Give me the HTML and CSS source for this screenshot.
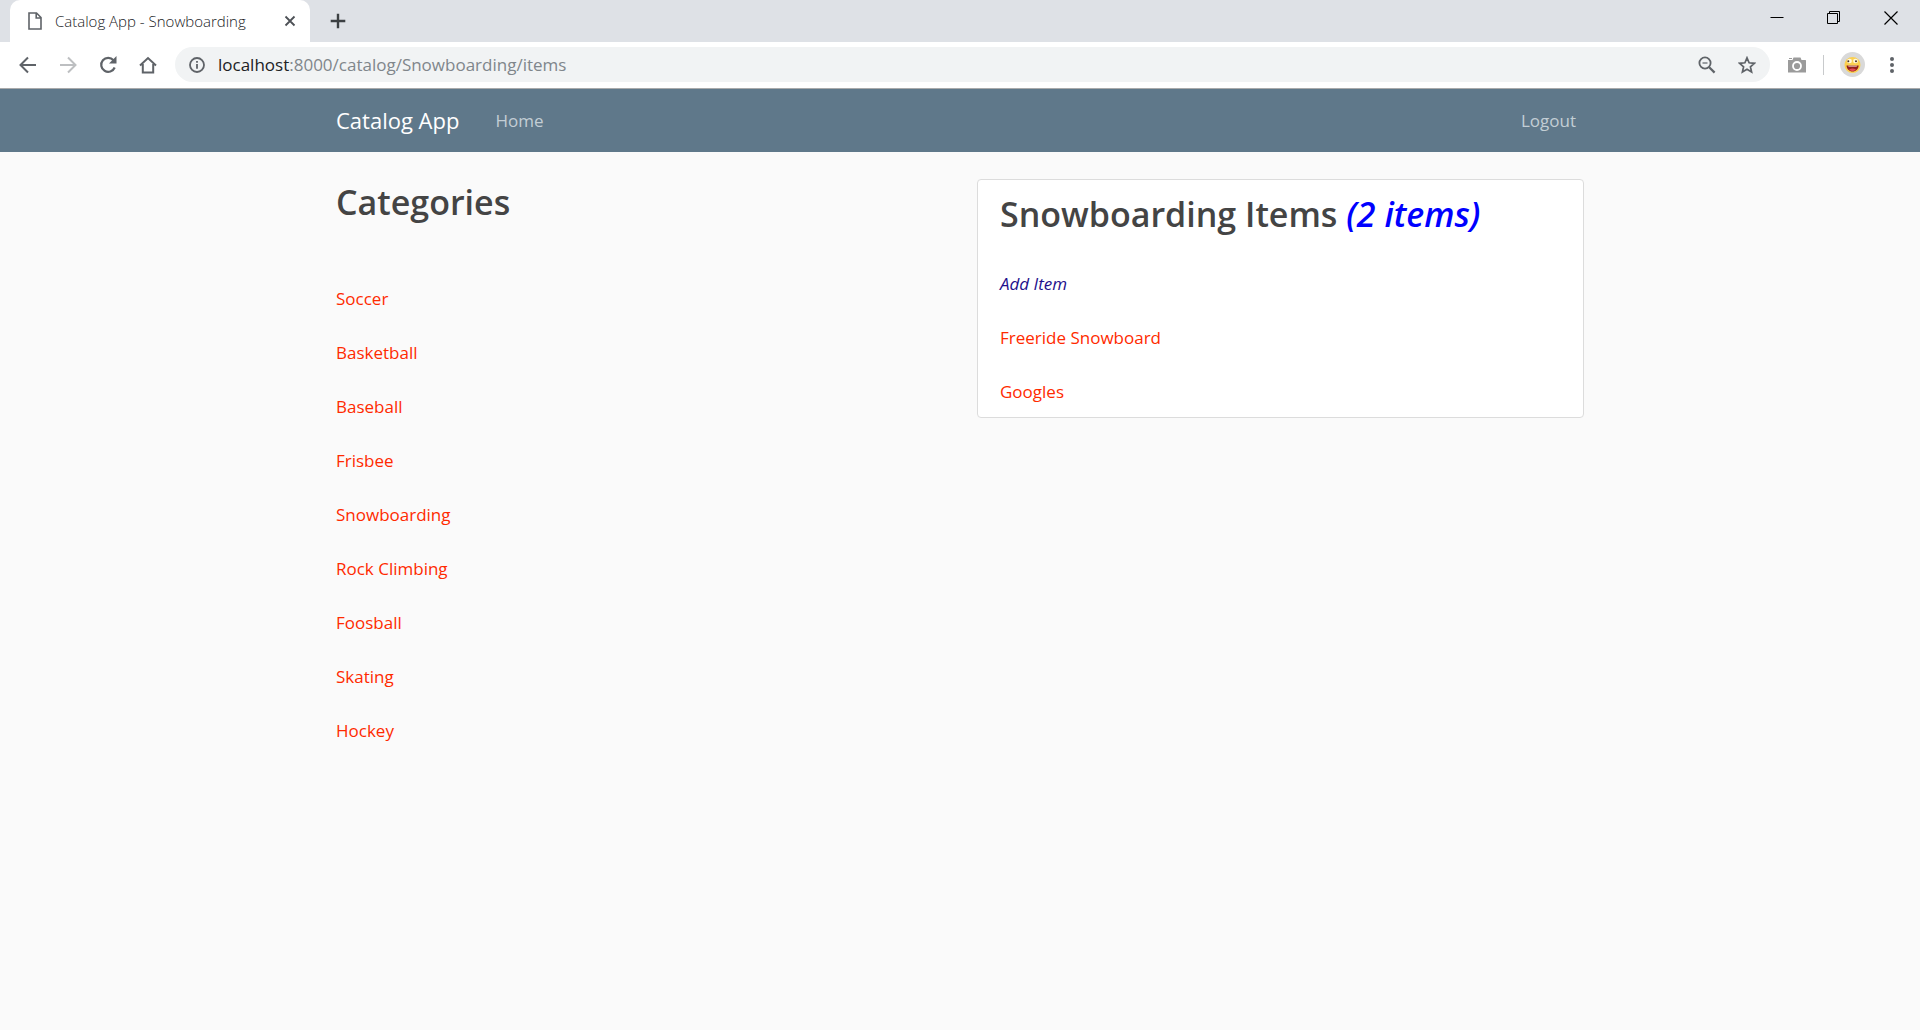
FILE: index.html
```html
<!DOCTYPE html>
<html lang="en">
<head>
<meta charset="utf-8">
<title>Catalog App - Snowboarding</title>
<link rel="stylesheet" href="styles.css">
</head>
<body>
<header class="browser">
  <div class="tab-strip">
    <div class="tab">
      <svg class="tab-icon" width="14" height="18" viewBox="0 0 14 18" fill="none" stroke="#5f6368" stroke-width="1.6"><path d="M1 1h7.500l4.500 4.500V17H1zM8.200 1v5H13"/></svg>
      <span class="tab-title">Catalog App - Snowboarding</span>
      <button class="icon-button" aria-label="Close tab"><svg width="12" height="12" viewBox="0 0 12 12" stroke="#4d5156" stroke-width="1.800"><path d="M1.500 1.500l9 9M10.500 1.500l-9 9"/></svg></button>
    </div>
    <button class="icon-button new-tab" aria-label="New tab"><svg width="16" height="16" viewBox="0 0 16 16" stroke="#3c4043" stroke-width="2.400"><path d="M8 .7v14.600M.7 8h14.600"/></svg></button>
    <div class="window-controls">
      <button class="icon-button" aria-label="Minimize"><svg width="14" height="14" viewBox="0 0 14 14" stroke="#000"><path d="M.5 6.500h13"/></svg></button>
      <button class="icon-button" aria-label="Restore"><svg width="14" height="14" viewBox="0 0 14 14" fill="none" stroke="#000"><path d="M.5 2.500h10v10H.5zM2.500 2.500v-2h10v10h-2"/></svg></button>
      <button class="icon-button" aria-label="Close"><svg width="14" height="14" viewBox="0 0 14 14" stroke="#000" stroke-width="1.200"><path d="M.5.5l13 13M13.500.5l-13 13"/></svg></button>
    </div>
  </div>
  <div class="toolbar">
    <div class="nav-buttons">
      <button class="icon-button" aria-label="Back"><svg width="18" height="18" viewBox="0 0 18 18" fill="none" stroke="#5f6368" stroke-width="2"><path d="M17 9H2M9 1.500L1.500 9 9 16.500"/></svg></button>
      <button class="icon-button" aria-label="Forward"><svg width="18" height="18" viewBox="0 0 18 18" fill="none" stroke="#bdbfc1" stroke-width="2"><path d="M1 9h15M9 1.500L16.500 9 9 16.500"/></svg></button>
      <button class="icon-button" aria-label="Reload"><svg width="18" height="18" viewBox="0 0 18 18" fill="none" stroke="#5f6368" stroke-width="2.200"><path d="M14.500 4.200A7 7 0 1 0 15.700 11.500"/><path d="M17.500 0v7.500H10z" fill="#5f6368" stroke="none"/></svg></button>
      <button class="icon-button" aria-label="Home"><svg width="18" height="18" viewBox="0 0 18 18" fill="none" stroke="#5f6368" stroke-width="2"><path d="M1 9.500L9 2l8 7.500M3.800 8v8.500h10.400V8"/></svg></button>
    </div>
    <div class="address-bar">
      <svg width="16" height="16" viewBox="0 0 16 16" fill="none" stroke="#5f6368" stroke-width="1.800"><circle cx="8" cy="8" r="7"/><path d="M8 7v4.800M8 4v1.800"/></svg>
      <span class="url"><span class="url-host">localhost</span>:8000/catalog/Snowboarding/items</span>
      <button class="icon-button" aria-label="Zoom out"><svg width="18" height="18" viewBox="0 0 18 18" fill="none" stroke="#5f6368" stroke-width="1.800"><circle cx="7" cy="7" r="5.600"/><path d="M11.200 11.200l5.400 5.400" stroke-width="2.200"/><path d="M4.500 7h5" stroke-width="1.200"/></svg></button>
      <button class="icon-button" aria-label="Bookmark"><svg width="18" height="18" viewBox="0 0 18 18" fill="none" stroke="#5f6368" stroke-width="1.700"><path d="M9 1.800l2.100 5 5.300.5-4 3.500 1.200 5.300L9 13.300l-4.600 2.800 1.200-5.300-4-3.500 5.300-.5z"/></svg></button>
    </div>
    <div class="extensions">
      <button class="icon-button" aria-label="Screenshot"><svg width="20" height="18" viewBox="0 0 20 18"><path d="M1 4h4.500l1-2.500h7l1 2.500H18.500l.5.500v12H1z" fill="#9b9b9b"/><path d="M2 2.500h3" stroke="#9b9b9b"/><circle cx="10" cy="10" r="4" fill="#9b9b9b" stroke="#fff" stroke-width="1.800"/></svg></button>
      <span class="divider"></span>
      <button class="icon-button" aria-label="Profile"><svg width="25" height="25" viewBox="0 0 25 25"><circle cx="12.500" cy="12.500" r="12.500" fill="#d9d9d9"/><circle cx="12.500" cy="13" r="8" fill="#fbd051"/><ellipse cx="9.500" cy="9" rx="2.400" ry="2.200" fill="#fff8dc"/><ellipse cx="15.500" cy="9" rx="2.400" ry="2.200" fill="#fff8dc"/><circle cx="8.300" cy="9.200" r="1" fill="#4a3425"/><circle cx="16" cy="9.200" r="1" fill="#4a3425"/><path d="M6.500 13.500h12.200c-.3 3.500-2.700 6-6.100 6s-5.800-2.500-6.100-6z" fill="#941f1b"/><path d="M8 13.700h9.200l-.6.800H8.600z" fill="#fff"/><path d="M9 17.500q3.500-2 7 0-3.500 3.200-7 0z" fill="#e94b55"/></svg></button>
      <button class="icon-button menu" aria-label="Menu"><svg width="6" height="18" viewBox="0 0 6 18" fill="#5f6368"><circle cx="3" cy="3" r="2"/><circle cx="3" cy="9" r="2"/><circle cx="3" cy="15" r="2"/></svg></button>
    </div>
  </div>
</header>
<nav class="navbar">
  <div class="container navbar-inner">
    <a class="brand" href="#">Catalog App</a>
    <a class="nav-link" href="#">Home</a>
    <a class="nav-link nav-end" href="#">Logout</a>
  </div>
</nav>
<main class="container columns">
  <section class="categories">
    <h1 class="heading">Categories</h1>
    <ul class="links">
      <li><a href="#">Soccer</a></li>
      <li><a href="#">Basketball</a></li>
      <li><a href="#">Baseball</a></li>
      <li><a href="#">Frisbee</a></li>
      <li><a href="#">Snowboarding</a></li>
      <li><a href="#">Rock Climbing</a></li>
      <li><a href="#">Foosball</a></li>
      <li><a href="#">Skating</a></li>
      <li><a href="#">Hockey</a></li>
    </ul>
  </section>
  <section class="card">
    <h1 class="heading">Snowboarding Items <em class="count">(2 items)</em></h1>
    <ul class="links">
      <li><a class="add-item" href="#">Add Item</a></li>
      <li><a href="#">Freeride Snowboard</a></li>
      <li><a href="#">Googles</a></li>
    </ul>
  </section>
</main>
</body>
</html>
```

FILE: styles.css
```css
* { box-sizing: border-box; }

body {
  margin: 0;
  background: #fafafa;
  color: #444;
  font: 400 17px/27px "Open Sans", "Noto Sans", sans-serif;
}

a { color: #ff2a00; text-decoration: none; }

.icon-button {
  display: flex;
  padding: 0;
  border: 0;
  background: none;
}

/* Browser frame */
.browser { border-bottom: 1px solid #a9aaab; background: #fff; }

.tab-strip {
  display: flex;
  align-items: center;
  height: 42px;
  padding-left: 10px;
  background: #dee1e6;
}

.tab {
  display: flex;
  align-items: center;
  width: 300px;
  height: 42px;
  padding: 0 14px 0 18px;
  border-radius: 10px 10px 0 0;
  background: #fff;
  color: #202124;
  font-size: 15px;
  font-weight: 300;
}

.tab-icon { margin-right: 13px; }
.tab-title { flex: 1; }
.new-tab { margin-left: 20px; }

.window-controls {
  display: flex;
  gap: 43px;
  margin-left: auto;
  padding: 0 22px 6px 0;
}

.toolbar {
  display: flex;
  align-items: center;
  height: 46px;
  padding-bottom: 1px;
}

.nav-buttons { display: flex; gap: 22px; padding: 0 18px 0 19px; }

.address-bar {
  display: flex;
  flex: 1;
  align-items: center;
  gap: 22px;
  height: 35px;
  padding: 0 14px;
  border-radius: 18px;
  background: #f1f3f4;
}

.url { flex: 1; margin-left: -9px; color: #80868b; }
.url-host { color: #202124; }

.extensions {
  display: flex;
  align-items: center;
  gap: 16px;
  padding: 0 25px 0 17px;
}

.divider { width: 1px; height: 20px; background: #c8cacc; }
.menu { margin-left: 8px; }

/* Application */
.container {
  width: 100%;
  max-width: 1280px;
  margin: 0 auto;
  padding: 0 16px;
}

.navbar { background: #5f788a; }

.navbar-inner {
  display: flex;
  align-items: center;
  height: 63px;
}

.brand { margin-right: 36px; color: #fff; font-size: 22px; }
.nav-link { color: #c3ced5; }
.nav-end { margin-left: auto; padding-right: 8px; }

.columns {
  display: grid;
  grid-template-columns: 1fr 1fr;
  align-items: start;
  gap: 34px;
  padding-top: 27px;
}

.heading { margin: 0; font-size: 34px; font-weight: 600; line-height: 46px; }
.count { color: #00f; }

.links {
  display: grid;
  gap: 27px;
  margin: 0;
  padding: 0;
  list-style: none;
}

.categories .links { padding-top: 60px; }

.card {
  padding: 11px 22px 12px;
  border: 1px solid #dcdcdc;
  border-radius: 4px;
  background: #fff;
}

.card .links { padding-top: 33px; }
.add-item { color: #23108c; font-style: italic; }
```
